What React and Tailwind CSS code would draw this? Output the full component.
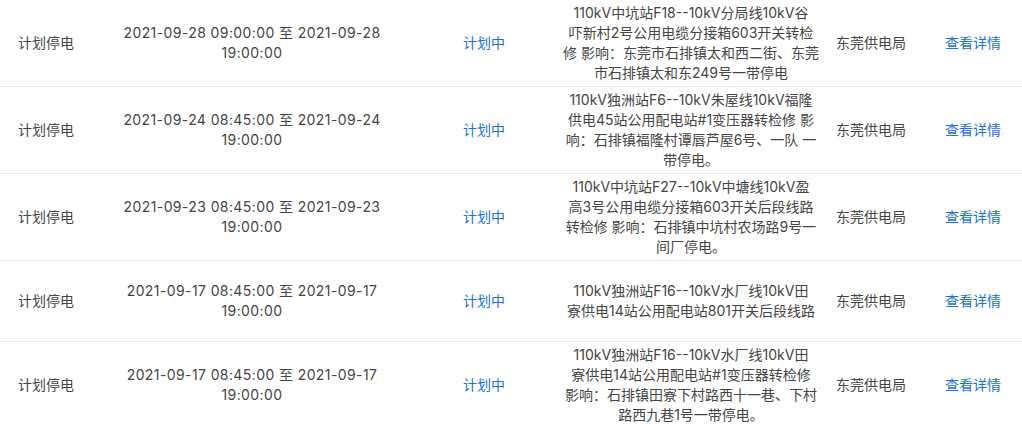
import React from "react";

const rows = [
  {
    date: ["2021-09-28 09:00:00 至 2021-09-28", "19:00:00"],
    desc: [
      "110kV中坑站F18--10kV分局线10kV谷",
      "吓新村2号公用电缆分接箱603开关转检",
      "修 影响：东莞市石排镇太和西二街、东莞",
      "市石排镇太和东249号一带停电",
    ],
  },
  {
    date: ["2021-09-24 08:45:00 至 2021-09-24", "19:00:00"],
    desc: [
      "110kV独洲站F6--10kV朱屋线10kV福隆",
      "供电45站公用配电站#1变压器转检修 影",
      "响：石排镇福隆村谭唇芦屋6号、一队 一",
      "带停电。",
    ],
  },
  {
    date: ["2021-09-23 08:45:00 至 2021-09-23", "19:00:00"],
    desc: [
      "110kV中坑站F27--10kV中塘线10kV盈",
      "高3号公用电缆分接箱603开关后段线路",
      "转检修 影响：石排镇中坑村农场路9号一",
      "间厂停电。",
    ],
  },
  {
    date: ["2021-09-17 08:45:00 至 2021-09-17", "19:00:00"],
    desc: [
      "110kV独洲站F16--10kV水厂线10kV田",
      "寮供电14站公用配电站801开关后段线路",
    ],
  },
  {
    date: ["2021-09-17 08:45:00 至 2021-09-17", "19:00:00"],
    desc: [
      "110kV独洲站F16--10kV水厂线10kV田",
      "寮供电14站公用配电站#1变压器转检修",
      "影响：石排镇田寮下村路西十一巷、下村",
      "路西九巷1号一带停电。",
    ],
  },
];

export default function App() {
  return (
    <div
      className="w-[1022px] h-[428px] overflow-hidden bg-white text-[14px] text-[#454545]"
      style={{ fontFamily: '"Inter", "Noto Sans CJK SC", sans-serif' }}
    >
      {rows.map((r, i) => (
        <div
          key={i}
          className={
            "grid grid-cols-[92px_320px_144px_270px_90px_106px] items-center min-h-[81px] " +
            (i < rows.length - 1 ? "border-b border-[#e8e8e8]" : "")
          }
        >
          <div className="text-center leading-[20px]">计划停电</div>
          <div className="text-center leading-[20px] tracking-[0.4px]">
            {r.date.map((d, j) => (
              <div key={j}>{d}</div>
            ))}
          </div>
          <div className="text-center leading-[20px] text-[#1a72d4]">计划中</div>
          <div className="text-center leading-[20px] py-[3px]">
            {r.desc.map((d, j) => (
              <div key={j} className="whitespace-nowrap">{d}</div>
            ))}
          </div>
          <div className="text-center leading-[20px]">东莞供电局</div>
          <div className="text-center leading-[20px] pl-2 text-[#1a72d4]">查看详情</div>
        </div>
      ))}
    </div>
  );
}
